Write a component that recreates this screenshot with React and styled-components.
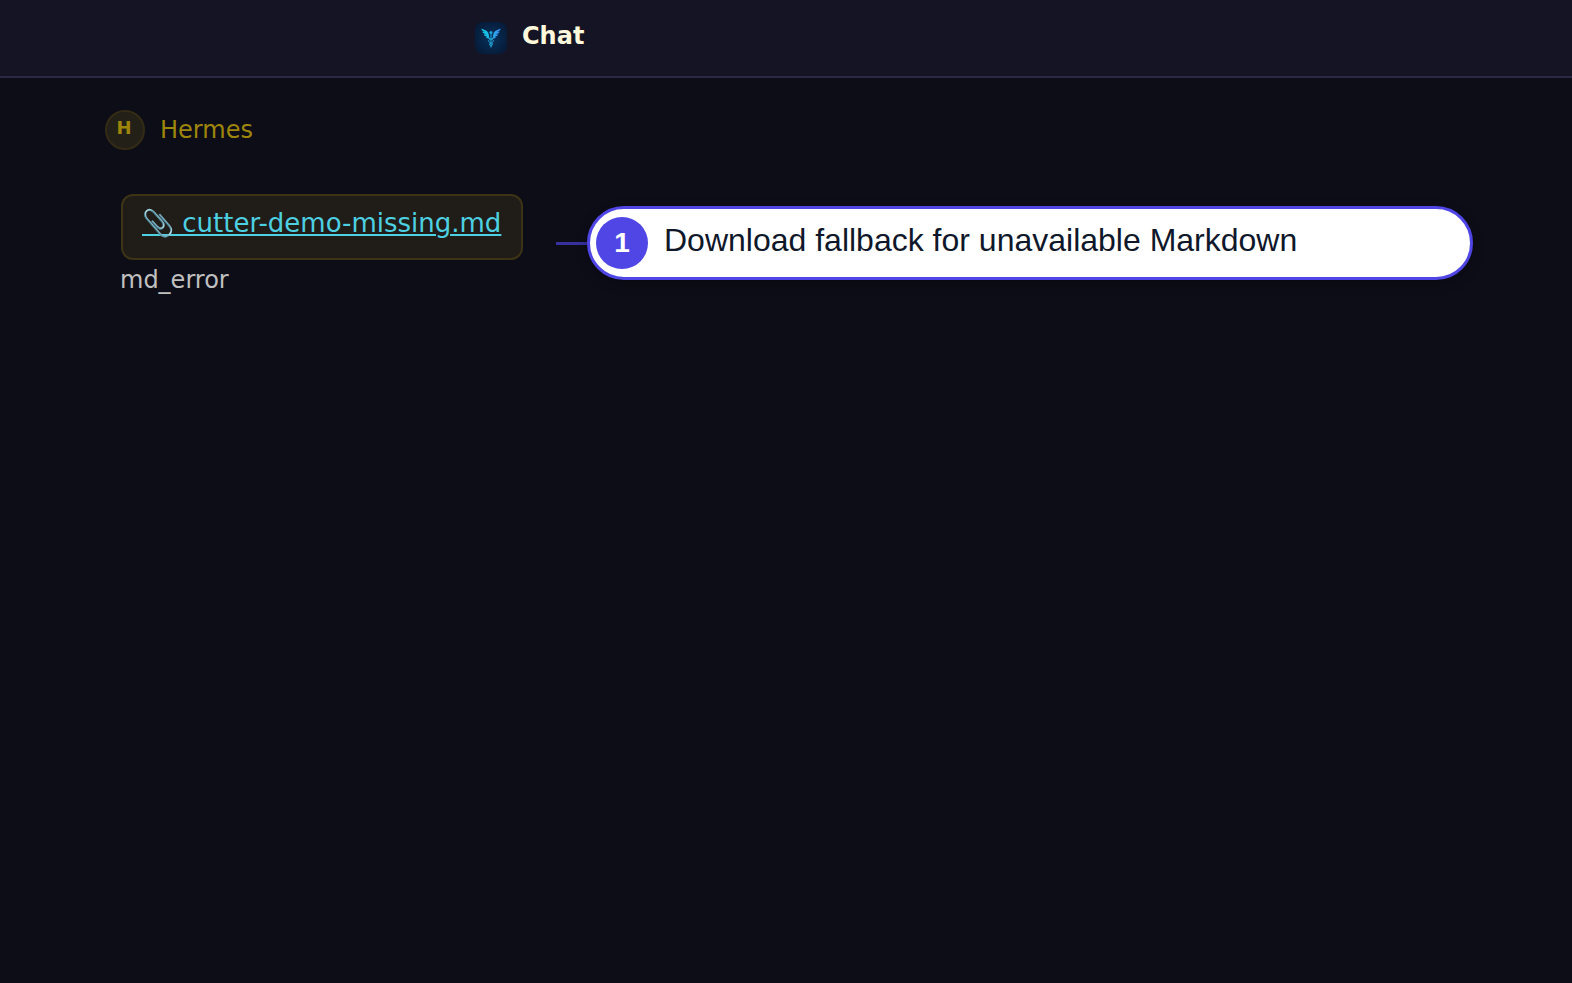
import React from "react";
import styled, { createGlobalStyle } from "styled-components";

const GlobalStyle = createGlobalStyle`
  * { box-sizing: border-box; }
  body {
    margin: 0;
    background: #0d0d18;
    color: #c0c0c0;
    font-family: "DejaVu Sans", Verdana, sans-serif;
  }
`;

const Header = styled.header`
  display: flex;
  align-items: flex-start;
  gap: 15px;
  height: 78px;
  padding: 22px 32px 0 475px;
  background: #151424;
  border-bottom: 2px solid #2a2845;
`;

const Title = styled.h1`
  margin: 0;
  color: #fff8dc;
  font-size: 24px;
  line-height: 28px;
  font-weight: 700;
`;

const Logo = styled.svg`
  flex: none;
  width: 32px;
  height: 32px;
`;

const Main = styled.main`
  padding: 32px 99px 32px 105px;
`;

const Sender = styled.div`
  display: flex;
  align-items: center;
  gap: 15px;
  color: #9e860a;
  font-size: 24px;
  line-height: 40px;
`;

const Avatar = styled.span`
  width: 40px;
  height: 40px;
  padding-right: 2px;
  border: 2px solid #332b15;
  border-radius: 50%;
  background: #232018;
  font-size: 18px;
  line-height: 32px;
  font-weight: 700;
  text-align: center;
`;

const MessageRow = styled.div`
  display: flex;
  align-items: flex-start;
  padding: 44px 0 0 16px;
`;

const Message = styled.div`
  flex: none;
  width: 435px;
`;

const FileLink = styled.a`
  display: inline-flex;
  height: 66px;
  padding: 10px 20px 10px 19px;
  border: 2px solid #3d3315;
  border-radius: 12px;
  background: #201d18;
  color: #4dd0e1;
  font-size: 26px;
  line-height: 34px;
  text-decoration-thickness: 2px;
  text-underline-offset: 2px;
  white-space: pre;
  vertical-align: top;
`;

const Status = styled.p`
  margin: 6px 0 0 -1px;
  font-size: 24px;
  line-height: 28px;
`;

const Annotation = styled.aside`
  display: flex;
  align-items: center;
  flex: 1;
  margin-top: 12px;
`;

const Connector = styled.span`
  width: 31px;
  height: 3px;
  background: #37309e;
`;

const Callout = styled.div`
  display: flex;
  align-items: center;
  gap: 16px;
  flex: 1;
  height: 74px;
  padding: 0 24px 0 6px;
  border: 3px solid #4f46e5;
  border-radius: 37px;
  background: #fff;
  box-shadow: 0 4px 12px rgba(0, 0, 0, 0.25);
  color: #0f172a;
  font-family: "Liberation Sans", Arial, sans-serif;
  font-size: 32px;
  line-height: 36px;
`;

const Step = styled.span`
  flex: none;
  width: 52px;
  height: 52px;
  border-radius: 50%;
  background: #4f46e5;
  color: #fff;
  font-size: 28px;
  line-height: 52px;
  font-weight: 700;
  text-align: center;
`;

const CalloutText = styled.span`
  padding-bottom: 6px;
`;

function CaduceusLogo() {
  return (
    <Logo viewBox="0 0 32 32" aria-hidden="true">
      <defs>
        <radialGradient id="tile" r="0.7">
          <stop offset="0" stopColor="#07315c" />
          <stop offset="1" stopColor="#061630" />
        </radialGradient>
        <linearGradient id="wing" x1="6" x2="26" y1="0" y2="0" gradientUnits="userSpaceOnUse">
          <stop offset="0" stopColor="#12dcf0" />
          <stop offset="0.5" stopColor="#20a6dc" />
          <stop offset="1" stopColor="#4395ff" />
        </linearGradient>
      </defs>
      <rect width="32" height="32" rx="8" fill="url(#tile)" />
      <g fill="url(#wing)">
        <path d="M6 6.6 L11.5 8.8 Q13.6 10 13.9 13 L14.4 17 Q12 16.6 10.8 15 L12.2 14.6 Q9.5 14.2 8.7 12.4 L11.2 12.2 Q8 11.6 7.2 9.8 L10 9.8 Q6.8 9 6 6.6Z" />
        <path d="M26 6.6 L20.5 8.8 Q18.4 10 18.1 13 L17.6 17 Q20 16.6 21.2 15 L19.8 14.6 Q22.5 14.2 23.3 12.4 L20.8 12.2 Q24 11.6 24.8 9.8 L22 9.8 Q25.2 9 26 6.6Z" />
        <circle cx="16" cy="10.5" r="1.5" />
        <path d="M15.5 12h1v13.5h-1z" />
      </g>
      <path
        d="M14 16.5Q19.5 17.5 18.2 19.6Q17 21 14.5 21.8Q14 23 16.5 24M18 16.5Q12.5 17.5 13.8 19.6Q15 21 17.5 21.8Q18 23 15.5 24"
        fill="none"
        stroke="#21a2cf"
        strokeWidth="1"
      />
    </Logo>
  );
}

export default function App() {
  return (
    <>
      <GlobalStyle />
      <Header>
        <CaduceusLogo />
        <Title>Chat</Title>
      </Header>
      <Main>
        <Sender>
          <Avatar aria-hidden="true">H</Avatar>
          <span>Hermes</span>
        </Sender>
        <MessageRow>
          <Message>
            <FileLink href="#cutter-demo-missing.md">📎 cutter-demo-missing.md</FileLink>
            <Status>md_error</Status>
          </Message>
          <Annotation>
            <Connector />
            <Callout>
              <Step>1</Step>
              <CalloutText>Download fallback for unavailable Markdown</CalloutText>
            </Callout>
          </Annotation>
        </MessageRow>
      </Main>
    </>
  );
}
